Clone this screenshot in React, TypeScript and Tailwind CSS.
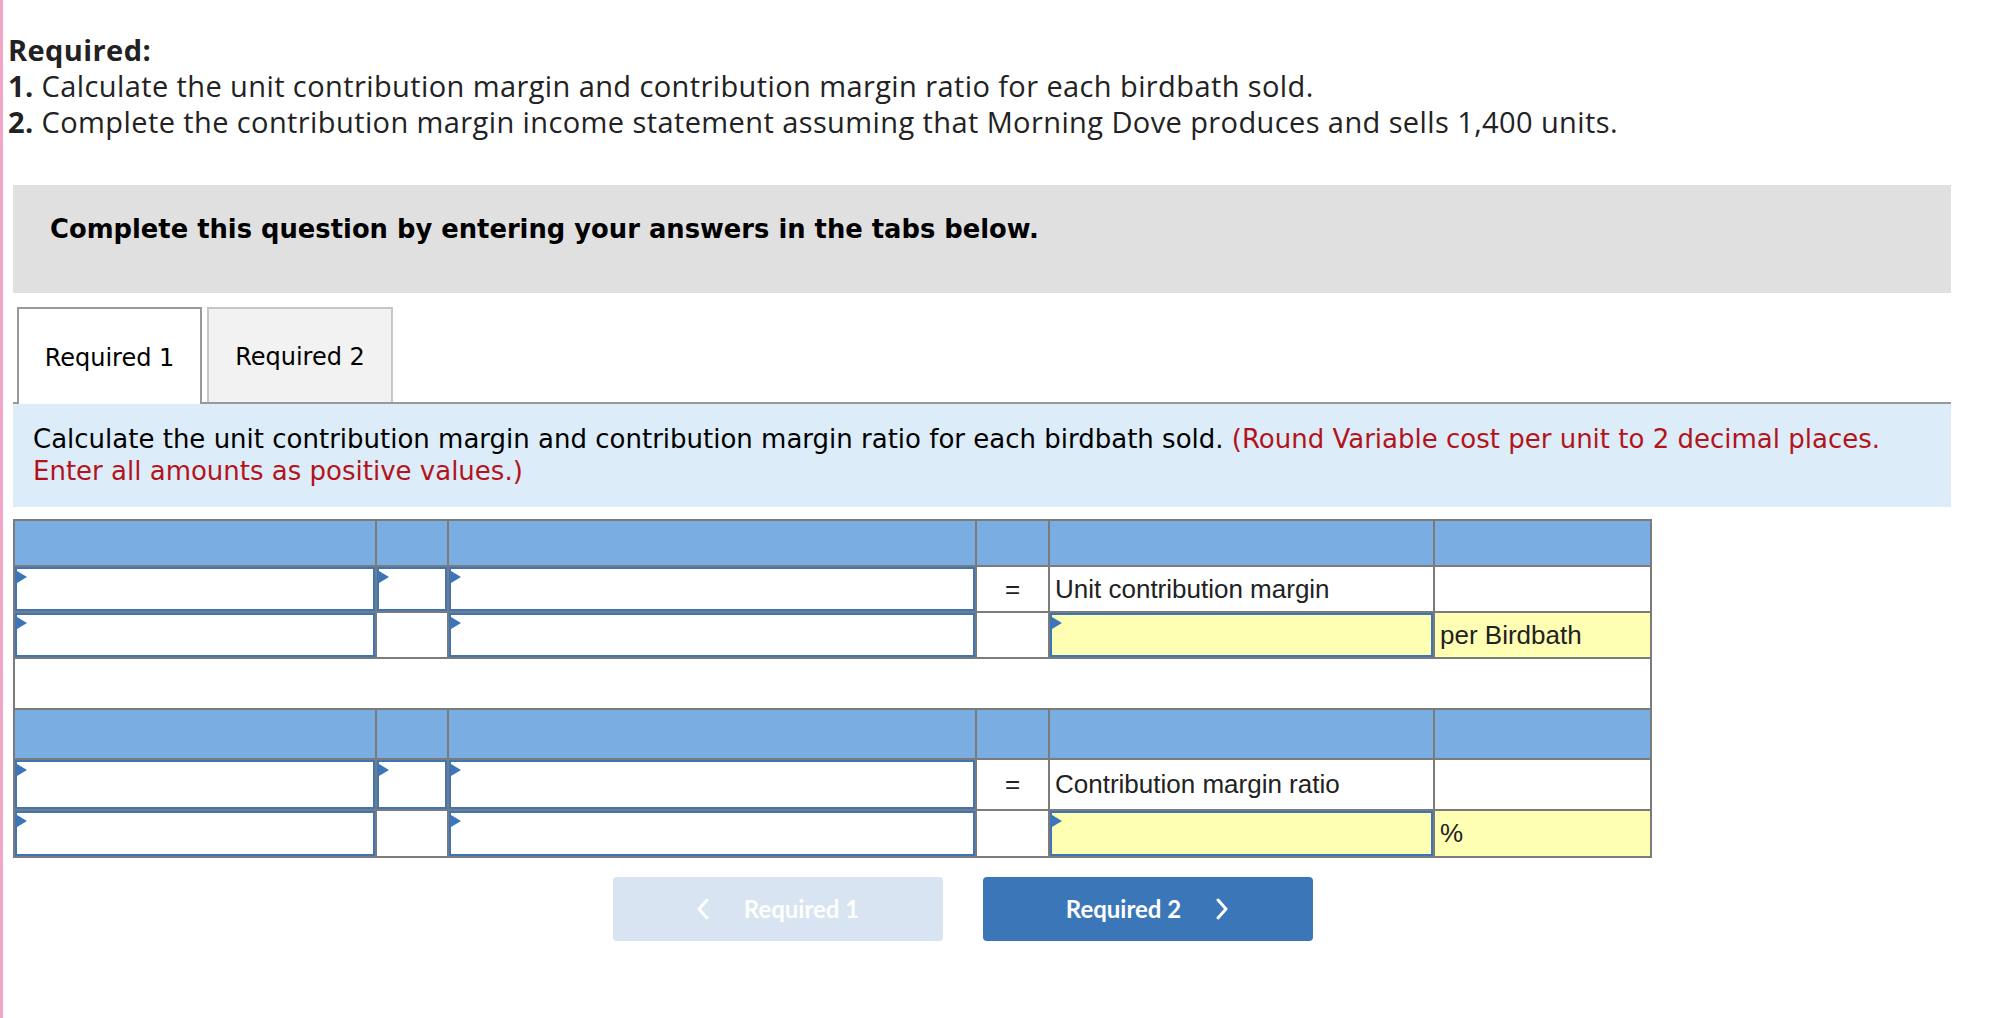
import React from 'react';

function Marker() {
  return (
    <span className="absolute left-0 top-[2px] w-0 h-0 border-y-[6px] border-y-transparent border-l-[10px] border-l-[#3d75b9]" />
  );
}

function InputCell({ h, yellow = false }: { h: string; yellow?: boolean }) {
  return (
    <td className="p-0 border-2 border-[#7b7b7b]">
      <div className={`relative ${h} border-2 border-[#3d75b9] ${yellow ? 'bg-[#ffffb3]' : 'bg-white'}`}>
        <Marker />
      </div>
    </td>
  );
}

function TextCell({ h, children, yellow = false, center = false }: { h: string; children?: React.ReactNode; yellow?: boolean; center?: boolean }) {
  return (
    <td className={`p-0 border-2 border-[#7b7b7b] ${yellow ? 'bg-[#ffffb3]' : 'bg-white'}`}>
      <div className={`${h} flex items-center px-[5px] text-[26px] text-[#222] ${center ? 'justify-center' : ''}`}>{children}</div>
    </td>
  );
}

function HeaderRow({ h }: { h: string }) {
  return (
    <tr>
      {[0, 1, 2, 3, 4, 5].map((i) => (
        <td key={i} className="p-0 border-2 border-[#7b7b7b] bg-[#7aade2]">
          <div className={h} />
        </td>
      ))}
    </tr>
  );
}

function Chevron({ dir }: { dir: 'left' | 'right' }) {
  return (
    <svg width="14" height="22" viewBox="0 0 14 22" fill="none" stroke="white" strokeWidth="3" strokeLinecap="round" strokeLinejoin="round">
      {dir === 'left' ? <path d="M11 2 L3 11 L11 20" /> : <path d="M3 2 L11 11 L3 20" />}
    </svg>
  );
}

export default function App() {
  return (
    <div className="min-h-[1018px] w-[2016px] bg-white border-l-[3px] border-[#f4a6c9]">
      <div className="pt-[32px] pl-[5px] font-['Open_Sans',sans-serif] text-[29px] tracking-[0.4px] leading-[36px] text-[#222]">
        <div className="font-bold">Required:</div>
        <div><span className="font-bold">1.</span> Calculate the unit contribution margin and contribution margin ratio for each birdbath sold.</div>
        <div><span className="font-bold">2.</span> Complete the contribution margin income statement assuming that Morning Dove produces and sells 1,400 units.</div>
      </div>

      <div className="ml-[10px] w-[1938px] font-['DejaVu_Sans',Verdana,sans-serif]">
        <div className="mt-[45px] h-[108px] bg-[#e0e0e0] pt-[29px] pl-[37px] text-[25.8px] leading-[30px] font-bold text-black">
          Complete this question by entering your answers in the tabs below.
        </div>

        <div className="mt-[14px] flex items-end border-b-2 border-[#999] pl-[4px] gap-[5px]">
          <div className="-mb-[2px] h-[97px] w-[185px] border-2 border-b-0 border-[#999] bg-white flex items-center justify-center pt-[2px] text-[24px] text-black">
            Required 1
          </div>
          <div className="h-[95px] w-[186px] border-2 border-b-0 border-[#c6c6c6] bg-[#f2f2f2] flex items-center justify-center pt-[2px] text-[24px] text-black">
            Required 2
          </div>
        </div>

        <div className="bg-[#dcecf8] pt-[19px] pb-[20px] pl-[20px] text-[26px] leading-[32px] text-black">
          Calculate the unit contribution margin and contribution margin ratio for each birdbath sold.{' '}
          <span className="text-[#b3141c]">(Round Variable cost per unit to 2 decimal places.</span>
          <br />
          <span className="text-[#b3141c]">Enter all amounts as positive values.)</span>
        </div>

        <table className="mt-[12px] table-fixed border-collapse border-2 border-[#7b7b7b] w-[1637px] font-['Liberation_Sans',Arial,sans-serif]">
          <colgroup>
            <col className="w-[362px]" />
            <col className="w-[72px]" />
            <col className="w-[528px]" />
            <col className="w-[73px]" />
            <col className="w-[385px]" />
            <col className="w-[217px]" />
          </colgroup>
          <tbody>
            <HeaderRow h="h-[44px]" />
            <tr>
              <InputCell h="h-[44px]" />
              <InputCell h="h-[44px]" />
              <InputCell h="h-[44px]" />
              <TextCell h="h-[44px]" center>=</TextCell>
              <TextCell h="h-[44px]">Unit contribution margin</TextCell>
              <TextCell h="h-[44px]" />
            </tr>
            <tr>
              <InputCell h="h-[44px]" />
              <TextCell h="h-[44px]" />
              <InputCell h="h-[44px]" />
              <TextCell h="h-[44px]" />
              <InputCell h="h-[44px]" yellow />
              <TextCell h="h-[44px]" yellow>per Birdbath</TextCell>
            </tr>
            <tr>
              <td colSpan={6} className="p-0 border-2 border-[#7b7b7b] bg-white">
                <div className="h-[49px]" />
              </td>
            </tr>
            <HeaderRow h="h-[48px]" />
            <tr>
              <InputCell h="h-[49px]" />
              <InputCell h="h-[49px]" />
              <InputCell h="h-[49px]" />
              <TextCell h="h-[49px]" center>=</TextCell>
              <TextCell h="h-[49px]">Contribution margin ratio</TextCell>
              <TextCell h="h-[49px]" />
            </tr>
            <tr>
              <InputCell h="h-[45px]" />
              <TextCell h="h-[45px]" />
              <InputCell h="h-[45px]" />
              <TextCell h="h-[45px]" />
              <InputCell h="h-[45px]" yellow />
              <TextCell h="h-[45px]" yellow>%</TextCell>
            </tr>
          </tbody>
        </table>

        <div className="mt-[19px] flex justify-center gap-[40px] pr-[39px] font-['Lato',sans-serif] font-bold text-[24px] text-white">
          <div className="h-[64px] w-[330px] rounded-[4px] bg-[#d8e4f1] flex items-center justify-center gap-[34px]">
            <Chevron dir="left" />
            <span>Required 1</span>
          </div>
          <div className="h-[64px] w-[330px] rounded-[4px] bg-[#3a76b8] flex items-center justify-center gap-[34px]">
            <span>Required 2</span>
            <Chevron dir="right" />
          </div>
        </div>
      </div>
    </div>
  );
}
